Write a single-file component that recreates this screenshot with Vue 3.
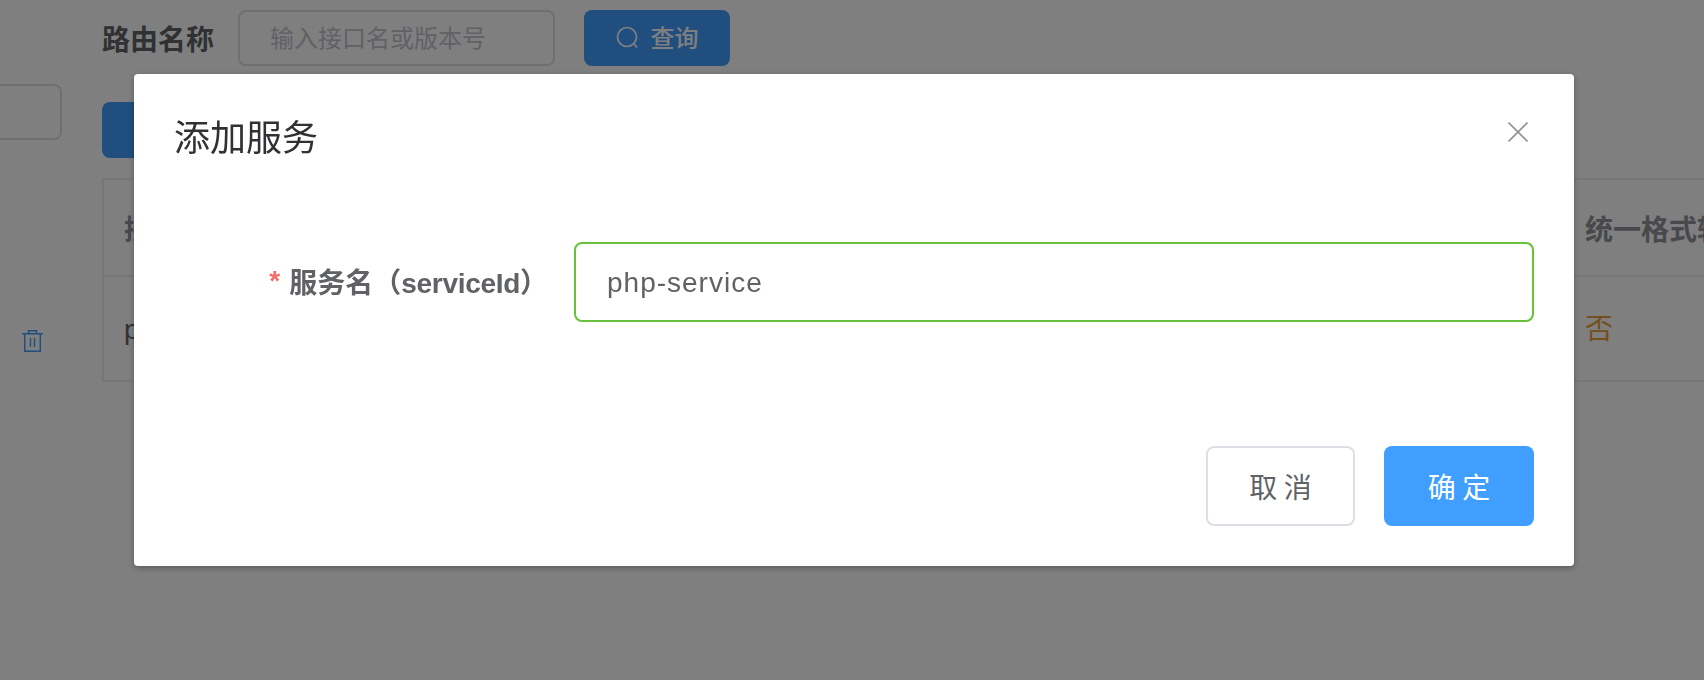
<script setup>
import { ref } from 'vue';

const serviceId = ref('php-service');

const columns = [
  { key: 'name', title: '接口名称' },
  { key: 'unified', title: '统一格式转换' },
];
const rows = [{ name: 'php-service', unified: '否' }];
</script>

<template>
  <div class="page">
    <!-- 左侧栏，只露出右边一小段 -->
    <aside class="side">
      <div class="side-input"></div>
      <button class="icon-btn" type="button" aria-label="删除">
        <svg width="21" height="22" viewBox="0 0 21 22" fill="none" stroke="currentColor" stroke-width="1.4">
          <path d="M0 3.7h21M6.5 3.7V0.8h8v2.9M2.7 3.7V21.2h15.6V3.7M8.5 8v9M12.5 8v9" />
        </svg>
      </button>
    </aside>

    <main class="content">
      <div class="search-bar">
        <label class="search-label">路由名称</label>
        <input class="search-input" placeholder="输入接口名或版本号" />
        <button class="btn btn-primary btn-search" type="button">
          <svg width="24" height="24" viewBox="0 0 24 24" fill="none" stroke="currentColor" stroke-width="1.7">
            <circle cx="11" cy="11" r="9.5" />
            <path d="M18 18l3 3.5" />
          </svg>
          <span>查询</span>
        </button>
      </div>

      <button class="btn btn-primary btn-add" type="button">添加路由</button>

      <div class="table">
        <div class="tr tr-head">
          <div v-for="col in columns" :key="col.key" class="td" :class="'td-' + col.key">{{ col.title }}</div>
        </div>
        <div v-for="row in rows" :key="row.name" class="tr tr-body">
          <div class="td td-name">{{ row.name }}</div>
          <div class="td td-unified warn">{{ row.unified }}</div>
        </div>
      </div>
    </main>

    <div class="mask">
      <div class="dialog">
        <header class="dialog-header">
          <span class="dialog-title">添加服务</span>
          <button class="dialog-close" type="button" aria-label="关闭">
            <svg width="20" height="20" viewBox="0 0 20 20" fill="none" stroke="currentColor" stroke-width="1.6">
              <path d="M0.5 0.5l19 19M19.5 0.5l-19 19" />
            </svg>
          </button>
        </header>
        <div class="dialog-body">
          <div class="form-item">
            <label class="form-label"><i class="star">*</i>服务名（<span class="latin">serviceId</span>）</label>
            <input v-model="serviceId" class="form-input" />
          </div>
        </div>
        <footer class="dialog-footer">
          <button class="btn btn-default" type="button">取 消</button>
          <button class="btn btn-confirm" type="button">确 定</button>
        </footer>
      </div>
    </div>
  </div>
</template>

<style>
html, body {
  margin: 0;
  background: #fff;
}
</style>

<style scoped>
.page {
  display: flex;
  width: 1704px;
  height: 680px;
  overflow: hidden;
  background: #fff;
  font-family: "Liberation Sans", "Noto Sans CJK SC", sans-serif;
  color: #303133;
}

.side {
  display: flex;
  flex-direction: column;
  width: 102px;
  flex-shrink: 0;
}

.side-input {
  box-sizing: border-box;
  width: 62px;
  height: 56px;
  margin-top: 84px;
  border: 2px solid #dcdfe6;
  border-left: none;
  border-radius: 0 8px 8px 0;
}

.icon-btn {
  width: 21px;
  height: 22px;
  margin: 190px 0 0 22px;
  padding: 0;
  border: none;
  background: transparent;
  color: #409eff;
}

.content {
  flex: 1;
  min-width: 0;
  padding-top: 10px;
}

.search-bar {
  display: flex;
  align-items: center;
}

.search-label {
  width: 136px;
  font-size: 28px;
  font-weight: 700;
  color: #606266;
}

.search-input {
  box-sizing: border-box;
  width: 317px;
  height: 56px;
  padding: 2px 30px 0;
  border: 2px solid #dcdfe6;
  border-radius: 8px;
  font: inherit;
  font-size: 24px;
  outline: none;
}

.search-input::placeholder {
  color: #c0c4cc;
}

.btn {
  box-sizing: border-box;
  border: none;
  border-radius: 8px;
  font: inherit;
  font-size: 24px;
  cursor: pointer;
}

.btn-primary {
  background: #409eff;
  color: #fff;
}

.btn-search {
  display: flex;
  align-items: center;
  justify-content: center;
  gap: 11px;
  width: 146px;
  height: 56px;
  margin-left: 29px;
  font-family: "Noto Sans CJK SC", sans-serif;
  font-weight: 500;
}

.btn-search span {
  padding-bottom: 3px;
  line-height: 24px;
}

.btn-add {
  display: block;
  width: 180px;
  height: 56px;
  margin-top: 36px;
}

.table {
  box-sizing: border-box;
  width: 1700px;
  height: 204px;
  margin-top: 20px;
  border: 2px solid #ebeef5;
  border-right: none;
}

.tr {
  display: flex;
}

.tr-head {
  height: 95px;
  border-bottom: 2px solid #ebeef5;
  font-size: 28px;
  font-weight: 700;
  color: #909399;
}

.tr-body {
  height: 105px;
  font-size: 28px;
  color: #606266;
}

.td {
  display: flex;
  align-items: center;
  white-space: nowrap;
}

.td-name {
  width: 1481px;
  padding-left: 20px;
  box-sizing: border-box;
}

.warn {
  padding-bottom: 6px;
  color: #e6a23c;
}

.mask {
  position: fixed;
  inset: 0;
  background: rgba(0, 0, 0, 0.5);
}

.dialog {
  display: flex;
  flex-direction: column;
  box-sizing: border-box;
  width: 1440px;
  height: 492px;
  margin: 74px 0 0 134px;
  background: #fff;
  border-radius: 4px;
  box-shadow: 0 2px 6px rgba(0, 0, 0, 0.3);
}

.dialog-header {
  display: flex;
  justify-content: space-between;
  padding: 42px 46px 0 40px;
}

.dialog-title {
  font-size: 36px;
  line-height: 46px;
  color: #303133;
}

.dialog-close {
  width: 20px;
  height: 20px;
  margin-top: 6px;
  padding: 0;
  border: none;
  background: transparent;
  color: #909399;
}

.dialog-body {
  flex: 1;
  padding: 80px 40px 0 41px;
}

.form-item {
  display: flex;
  align-items: center;
}

.form-label {
  box-sizing: border-box;
  width: 399px;
  padding-right: 26px;
  text-align: right;
  font-size: 28px;
  line-height: 40px;
  font-weight: 700;
  color: #606266;
  white-space: nowrap;
}

.latin {
  letter-spacing: -0.3px;
}

.star {
  margin-right: 9px;
  vertical-align: 3px;
  font-style: normal;
  font-weight: 700;
  color: #f56c6c;
}

.form-input {
  box-sizing: border-box;
  flex: 1;
  height: 80px;
  padding: 2px 31px 0;
  border: 2px solid #67c23a;
  border-radius: 8px;
  font: inherit;
  font-size: 28px;
  letter-spacing: 1px;
  color: #606266;
  outline: none;
}

.dialog-footer {
  display: flex;
  justify-content: flex-end;
  gap: 29px;
  padding: 0 40px 40px 0;
}

.btn-default,
.btn-confirm {
  width: 150px;
  height: 80px;
  font-size: 28px;
  font-family: "Noto Sans CJK SC", sans-serif;
  font-weight: 400;
}

.btn-default {
  width: 149px;
  border: 2px solid #dcdfe6;
  background: #fff;
  color: #606266;
}

.btn-confirm {
  background: #409eff;
  color: #fff;
}
</style>
